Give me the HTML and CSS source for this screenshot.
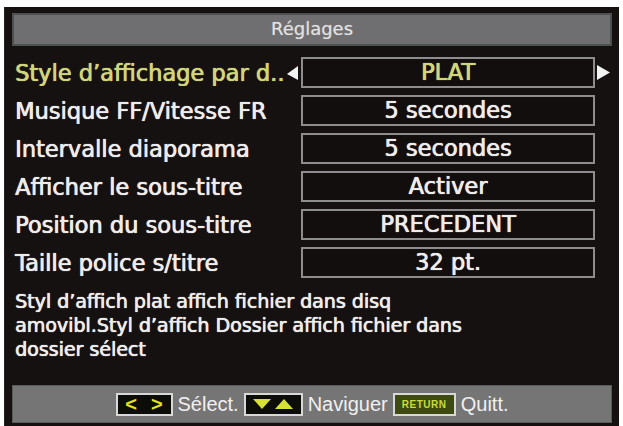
FILE: index.html
```html
<!DOCTYPE html>
<html lang="fr">
<head>
<meta charset="utf-8">
<title>Réglages</title>
<link rel="stylesheet" href="styles.css">
</head>
<body>
<div class="panel">
  <div class="title">Réglages</div>
  <div class="rows">
    <div class="row active">
      <div class="label">Style d’affichage par d..</div>
      <div class="arrow left"><svg width="11" height="14" viewBox="0 0 11 14"><polygon points="11,0 11,14 0,8" fill="#f2f2f2"/></svg></div>
      <div class="value">PLAT</div>
      <div class="arrow right"><svg width="13" height="15" viewBox="0 0 13 15"><polygon points="0,0 13,7.5 0,15" fill="#f2f2f2"/></svg></div>
    </div>
    <div class="row">
      <div class="label">Musique FF/Vitesse FR</div>
      <div class="arrow"></div>
      <div class="value">5 secondes</div>
      <div class="arrow"></div>
    </div>
    <div class="row">
      <div class="label">Intervalle diaporama</div>
      <div class="arrow"></div>
      <div class="value">5 secondes</div>
      <div class="arrow"></div>
    </div>
    <div class="row">
      <div class="label">Afficher le sous-titre</div>
      <div class="arrow"></div>
      <div class="value">Activer</div>
      <div class="arrow"></div>
    </div>
    <div class="row">
      <div class="label">Position du sous-titre</div>
      <div class="arrow"></div>
      <div class="value">PRECEDENT</div>
      <div class="arrow"></div>
    </div>
    <div class="row">
      <div class="label">Taille police s/titre</div>
      <div class="arrow"></div>
      <div class="value">32 pt.</div>
      <div class="arrow"></div>
    </div>
  </div>
  <p class="desc">Styl d’affich plat affich fichier dans disq<br>amovibl.Styl d’affich Dossier affich fichier dans<br>dossier sélect</p>
  <div class="footer">
    <div class="keys">
      <span class="key lr"><span class="chev">&lt;</span><span class="chev">&gt;</span></span>
      <span class="ftext">Sélect.</span>
      <span class="key ud"><svg width="44" height="14" viewBox="0 0 44 14"><polygon points="2,2 20,2 11,12" fill="#d6e336"/><polygon points="24,12 42,12 33,2" fill="#d6e336"/></svg></span>
      <span class="ftext">Naviguer</span>
      <span class="key ret">RETURN</span>
      <span class="ftext">Quitt.</span>
    </div>
  </div>
</div>
</body>
</html>
```
FILE: styles.css
```css
html, body {
  margin: 0;
  padding: 0;
  background: #ffffff;
}
body {
  width: 623px;
  height: 426px;
  overflow: hidden;
  font-family: "DejaVu Sans", "Liberation Sans", sans-serif;
}
.panel {
  box-sizing: border-box;
  margin: 7px 0 0 4px;
  width: 615px;
  height: 419px;
  background: #161111;
  padding: 6px 7px 3px 7px;
  display: flex;
  flex-direction: column;
  border-left: 1px solid #262222;
}
.title {
  box-sizing: border-box;
  height: 33px;
  background: #6f6e70;
  border: 2px solid #4f4e50;
  color: #e2e2e2;
  font-size: 18px;
  line-height: 27px;
  text-align: center;
  text-shadow: 0 0 1px rgba(255,255,255,0.4);
}
.rows {
  margin-top: 11px;
  display: flex;
  flex-direction: column;
  gap: 7px;
}
.row {
  display: grid;
  grid-template-columns: 1fr 14px 294px 17px;
  height: 31px;
  align-items: center;
}
.label {
  padding-left: 3px;
  color: #ececec;
  font-size: 22.5px;
  white-space: nowrap;
  overflow: hidden;
  text-shadow: 0 0 1px #ececec, 0.4px 0 0 #ececec;
}
.arrow {
  display: flex;
  align-items: center;
  height: 31px;
}
.arrow.left {
  justify-content: flex-start;
}
.arrow.right {
  justify-content: flex-start;
  padding-left: 2px;
}
.value {
  box-sizing: border-box;
  height: 31px;
  border: 2px solid #8e8c8c;
  background: #120e0e;
  color: #ececec;
  font-size: 22.5px;
  line-height: 26px;
  text-align: center;
  white-space: nowrap;
  text-shadow: 0 0 1px #ececec, 0.4px 0 0 #ececec;
}
.row.active .label,
.row.active .value {
  color: #cfd67c;
  text-shadow: 0 0 1px #cfd67c, 0.4px 0 0 #cfd67c;
}
.desc {
  margin: 11px 0 0 0;
  padding-left: 3px;
  color: #ececec;
  font-size: 19px;
  line-height: 24px;
  text-shadow: 0 0 1px #ececec, 0.4px 0 0 #ececec;
}
.footer {
  margin-top: auto;
  box-sizing: border-box;
  height: 38px;
  background: #767576;
  border: 1px solid #5a595a;
  display: flex;
  align-items: center;
  justify-content: center;
}
.keys {
  display: flex;
  align-items: center;
  gap: 5px;
}
.key {
  box-sizing: border-box;
  height: 23px;
  border: 2px solid #d8d8d8;
  background: #0c0c08;
  display: flex;
  align-items: center;
  justify-content: center;
}
.key.lr {
  width: 57px;
  gap: 14px;
}
.chev {
  color: #e4e21c;
  font-family: "Liberation Sans", sans-serif;
  font-size: 20px;
  font-weight: bold;
  line-height: 18px;
}
.key.ud {
  width: 59px;
}
.key.ret {
  width: 63px;
  background: #3d4a10;
  color: #c9dc3a;
  font-family: "Liberation Sans", sans-serif;
  font-size: 10px;
  font-weight: bold;
  letter-spacing: 0.5px;
}
.ftext {
  color: #f0f0f0;
  font-family: "Liberation Sans", sans-serif;
  font-size: 20px;
  line-height: 22px;
}
```
